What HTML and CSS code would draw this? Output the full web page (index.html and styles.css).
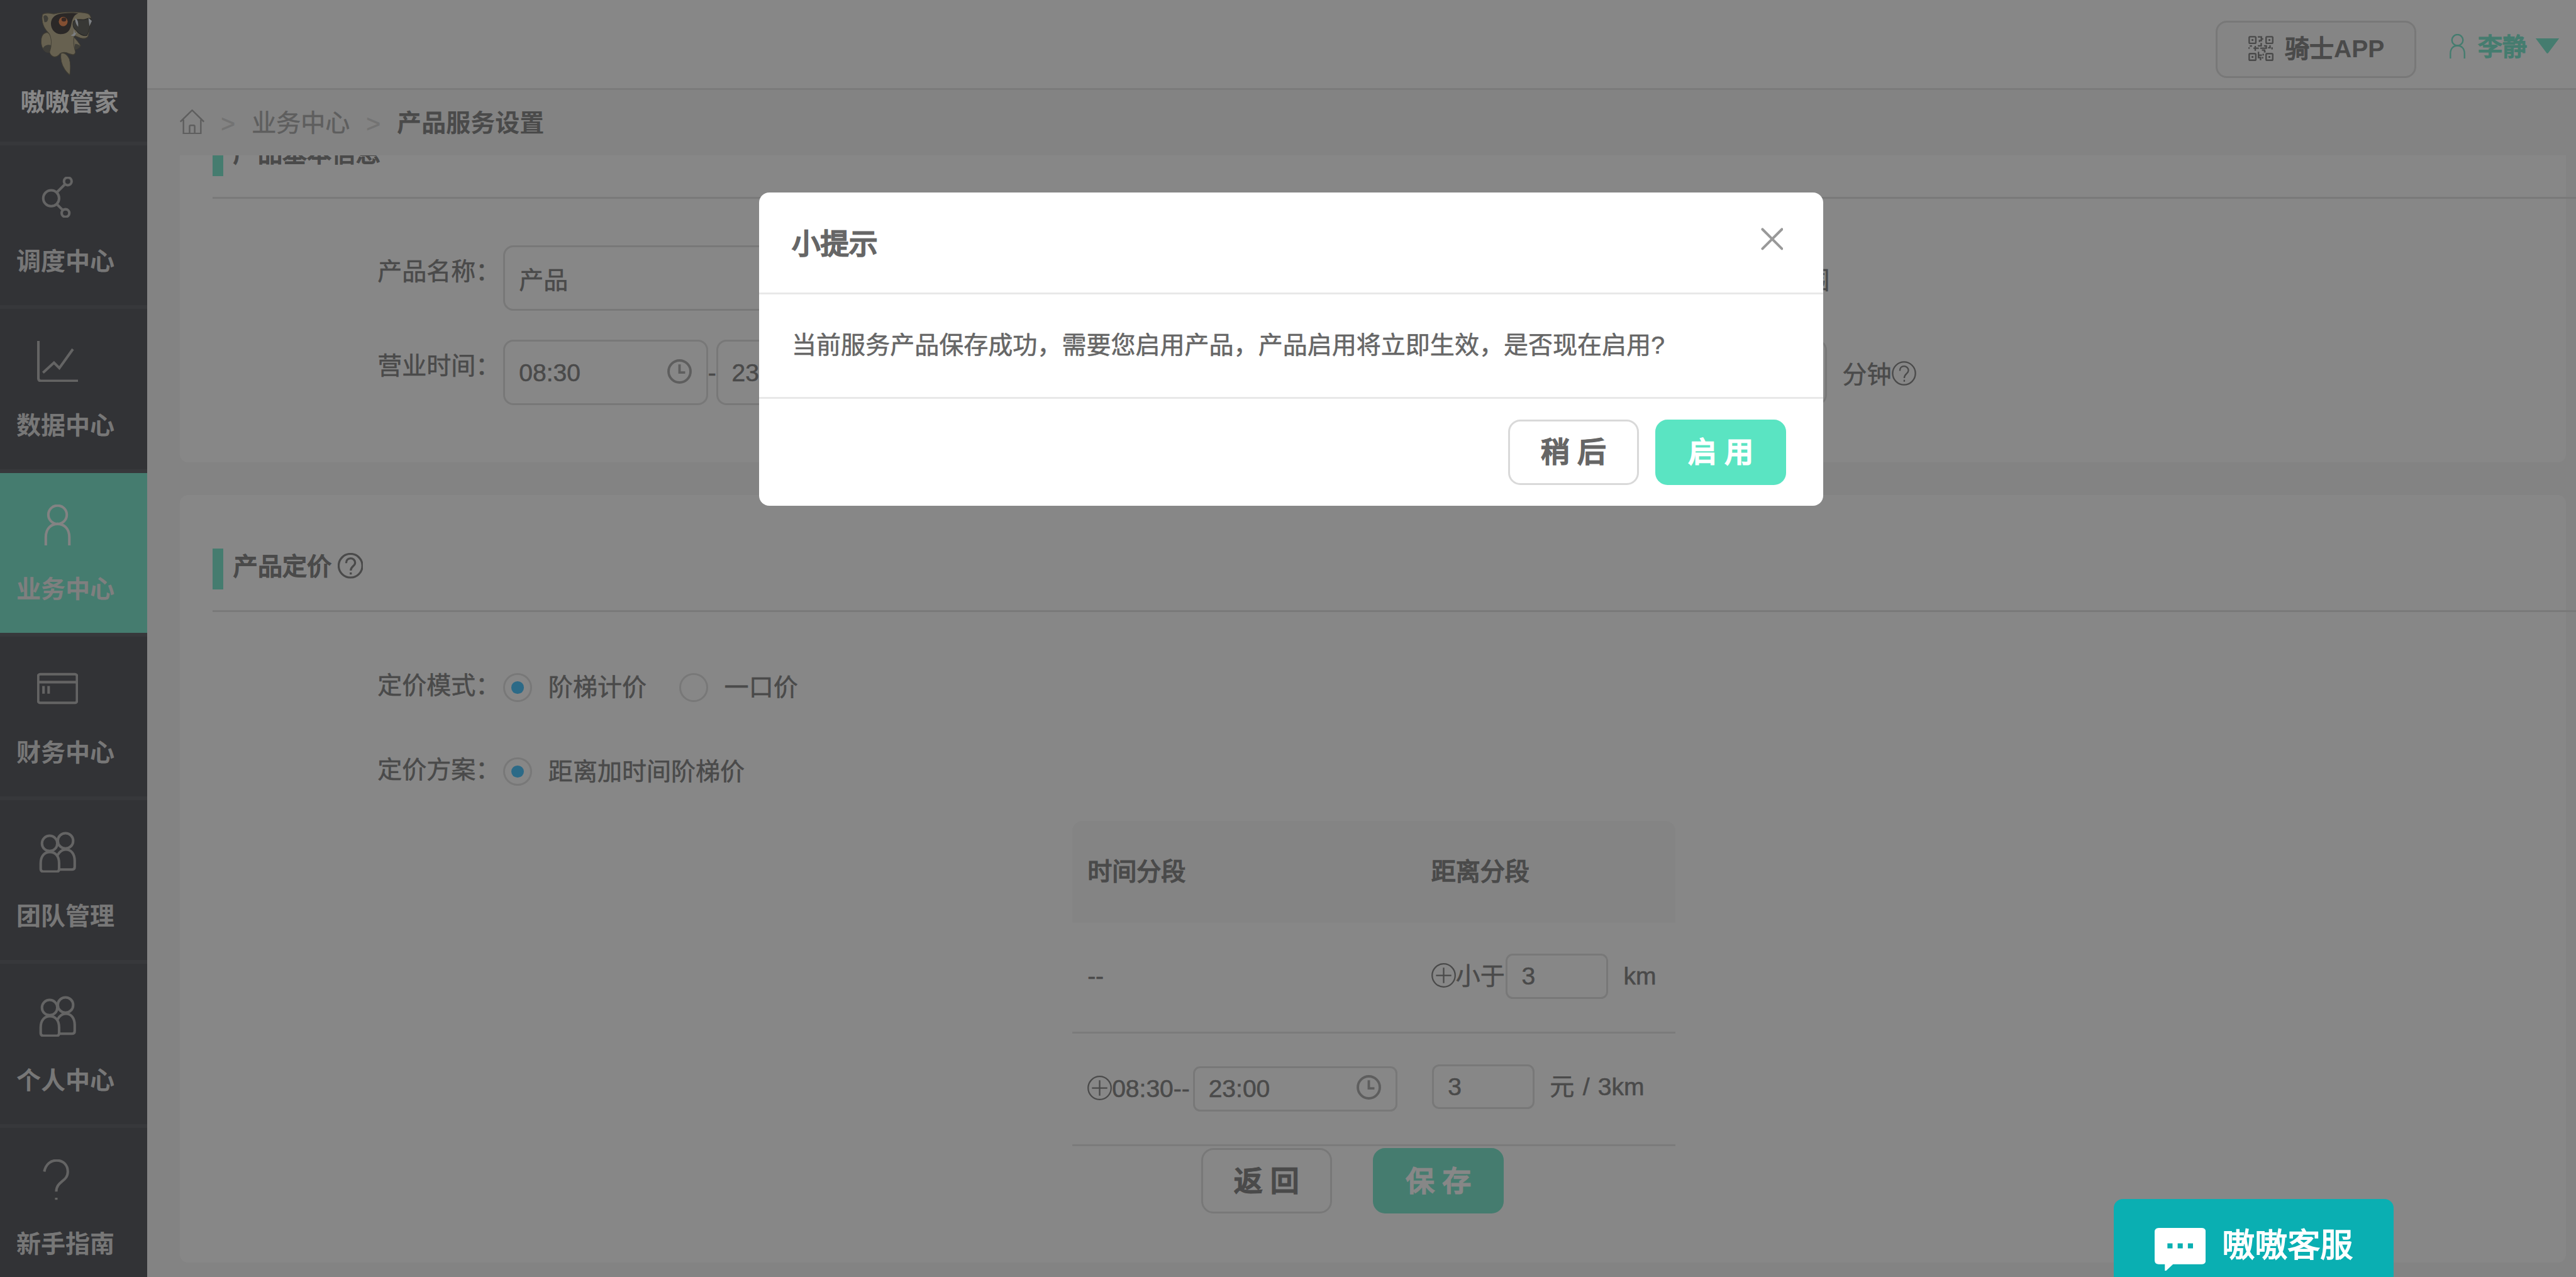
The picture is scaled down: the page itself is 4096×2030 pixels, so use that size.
FILE: index.html
```html
<!DOCTYPE html>
<html lang="zh-CN">
<head>
<meta charset="utf-8">
<title>嗷嗷管家 - 产品服务设置</title>
<link rel="stylesheet" href="styles.css">
</head>
<body>
<svg class="sprite" aria-hidden="true">
  <symbol id="i-help" viewBox="0 0 50 50"><circle cx="25" cy="25" r="23.2"/><path d="M16.5 20C16.5 14 20 10.5 25 10.5S34 14 34 19C34 26 25.500 26 25.500 34.500M25.500 38v4"/></symbol>
  <symbol id="i-clock" viewBox="0 0 48 48"><circle cx="24" cy="24" r="21.500"/><path class="hand" d="M24 10V26H35"/></symbol>
  <symbol id="i-plus" viewBox="0 0 48 48"><circle cx="24" cy="24" r="22.500"/><path d="M24 9V39M9 24H39"/></symbol>
  <symbol id="i-user" viewBox="0 0 80 80"><circle cx="40" cy="20" r="18"/><path d="M17 80V64C17 47 27 38 40 38S63 47 63 64V80"/></symbol>
  <symbol id="i-team" viewBox="0 0 80 80"><circle cx="24.500" cy="23" r="15"/><circle cx="55.500" cy="18" r="15"/><path d="M12 78H39Q43 78 43 73V62C43 48 36 40 25 40S7 48 7 62V73Q7 78 12 78ZM40 46C44 39 50 35 56 35C67 35 73.500 44 73.500 57V69Q73.500 74 69 74H44"/></symbol>
</svg>

<div class="app">
  <nav class="sidebar">
    <div class="brand">
      <svg class="brand-logo" viewBox="228 35 324 230" preserveAspectRatio="none">
        <path class="fur" d="M357 182C352 205 362 222 380 238C390 247 400 252 408 256C414 235 413 215 405 200C395 187 375 178 357 182Z"/>
        <path class="fur" d="M300 118C275 105 248 112 242 132C238 150 244 165 262 174C274 180 284 179 292 178L306 150Z"/>
        <path class="shade" d="M250 166C260 154 285 150 302 156L294 178C276 183 260 178 250 166Z"/>
        <path class="fur" d="M430 125C445 134 462 146 472 156C462 166 445 170 432 168Z"/>
        <path class="shade" d="M440 150C452 150 464 153 470 157C460 166 446 170 434 167Z"/>
        <path class="fur" d="M248 50C262 43 290 45 315 48C370 40 460 40 510 46C530 49 537 60 532 80L516 124C508 134 490 133 470 130L434 122C428 140 432 160 442 178C438 190 424 188 405 184C380 176 352 180 345 188C325 200 298 195 290 178C305 155 302 130 288 116C268 104 246 88 246 62Z"/>
        <path class="shade" d="M254 58C262 48 280 54 282 64C280 74 270 78 260 76Z"/>
        <path class="patch" d="M298 80C300 58 330 47 370 46C400 44 435 44 458 46C430 52 424 66 418 82C412 106 390 118 352 117C318 115 298 100 298 80Z"/>
        <path class="mouth" d="M428 76C438 64 460 68 486 68C505 68 522 58 534 66C530 90 520 108 510 121C490 125 460 116 446 104C432 98 424 88 428 76Z"/>
        <path class="fang" d="M440 64C452 64 460 74 458 92C448 86 440 76 440 64ZM518 62L538 72L524 90ZM414 122L430 116L434 100L438 114L450 110L436 124Z"/>
        <ellipse class="eye" cx="370" cy="74" rx="26" ry="16"/>
        <ellipse class="pupil" cx="374" cy="67" rx="14" ry="7"/>
      </svg>
      <span class="brand-name">嗷嗷管家</span>
    </div>
    <a class="nav-item">
      <svg class="nav-icon" viewBox="0 0 80 80"><circle cx="27.500" cy="42" r="15.500"/><circle cx="60" cy="9" r="7.500"/><circle cx="55.500" cy="71" r="7.500"/><path d="M38 31L54 15M38 53L50 65"/></svg>
      <span>调度中心</span>
    </a>
    <a class="nav-item">
      <svg class="nav-icon" viewBox="0 0 80 80"><path d="M2.500 0V73Q2.500 78 7 78H80M11.500 62L33 42.500L43.500 53L70 16"/></svg>
      <span>数据中心</span>
    </a>
    <a class="nav-item active">
      <svg class="nav-icon"><use href="#i-user"/></svg>
      <span>业务中心</span>
    </a>
    <a class="nav-item">
      <svg class="nav-icon" viewBox="0 0 80 80"><rect x="2" y="12" width="76" height="56" rx="4"/><path d="M2 27.500H78M12.500 35V50M22.500 35V50"/></svg>
      <span>财务中心</span>
    </a>
    <a class="nav-item">
      <svg class="nav-icon"><use href="#i-team"/></svg>
      <span>团队管理</span>
    </a>
    <a class="nav-item">
      <svg class="nav-icon"><use href="#i-team"/></svg>
      <span>个人中心</span>
    </a>
    <a class="nav-item">
      <svg class="nav-icon" viewBox="0 0 80 80"><path d="M14 24C17 9 27 2 38 2C52 2 60 12 60 24C60 44 37.500 42 37.500 63M37.500 75V79"/></svg>
      <span>新手指南</span>
    </a>
  </nav>

  <div class="page">
    <header class="topbar">
      <div class="app-btn">
        <svg class="qr" viewBox="28 28 148 148">
          <g class="finder"><rect x="33" y="33" width="39" height="39" rx="5"/><rect x="133" y="33" width="39" height="39" rx="5"/><rect x="33" y="133" width="39" height="39" rx="5"/><rect x="133" y="133" width="39" height="39" rx="5"/></g>
          <g class="dot"><rect x="47" y="47" width="11" height="11"/><rect x="147" y="47" width="11" height="11"/><rect x="47" y="147" width="11" height="11"/><rect x="147" y="147" width="11" height="11"/></g>
          <path d="M84 34H105V46H116M105 46V56H94V64M32 104V96M36 88H50M58 101H90M69 87V116M84 87H108M104 70V90M98 101H138M120 87H134V104M108 112H124V122H130M156 84V98H144M168 96V108M88 122V142H108M88 142V156H104M116 134V144M100 160V172M112 152V162"/>
        </svg>
        <span>骑士<b>APP</b></span>
      </div>
      <div class="account">
        <svg class="account-icon"><use href="#i-user"/></svg>
        <span>李静</span>
        <svg class="caret" viewBox="0 0 48 30"><path d="M1 0H47L26 28Q24 31 22 28Z"/></svg>
      </div>
    </header>

    <div class="crumbs">
      <svg class="home" viewBox="0 0 48 48"><path d="M1 24L24 1.500L47 24M7 20V47H41V20M19 47V33Q19 31 21 31H27Q29 31 29 33V47"/></svg>
      <span class="sep">&gt;</span>
      <span>业务中心</span>
      <span class="sep">&gt;</span>
      <strong>产品服务设置</strong>
    </div>

    <main class="scroller">
      <section class="card card-basic">
        <h2 class="section-head"><i></i><span>产品基本信息</span></h2>
        <div class="field-row first">
          <label>产品名称：</label>
          <div class="input wide"><span class="cjk">产品</span></div>
          <span class="scope">范围</span>
        </div>
        <div class="field-row">
          <label>营业时间：</label>
          <div class="input time"><span>08:30</span><svg class="clock"><use href="#i-clock"/></svg></div>
          <span class="dash">-</span>
          <div class="input time"><span>23:00</span><svg class="clock"><use href="#i-clock"/></svg></div>
          <div class="input minutes"></div>
          <span class="unit">分钟</span>
          <svg class="help-sm"><use href="#i-help"/></svg>
        </div>
      </section>

      <section class="card card-price">
        <h2 class="section-head"><i></i><span>产品定价</span><svg class="help-lg"><use href="#i-help"/></svg></h2>
        <div class="radio-row mode">
          <label>定价模式：</label>
          <span class="radio checked"></span><span class="radio-text">阶梯计价</span>
          <span class="radio"></span><span class="radio-text">一口价</span>
        </div>
        <div class="radio-row plan">
          <label>定价方案：</label>
          <span class="radio checked"></span><span class="radio-text">距离加时间阶梯价</span>
        </div>

        <div class="tiers">
          <div class="tr head"><div class="td">时间分段</div><div class="td">距离分段</div></div>
          <div class="tr distance">
            <div class="td">--</div>
            <div class="td"><svg class="plus"><use href="#i-plus"/></svg><span>小于</span><div class="input small after-text">3</div><span class="suffix">km</span></div>
          </div>
          <div class="tr period">
            <div class="td"><svg class="plus"><use href="#i-plus"/></svg><span>08:30--</span><div class="input small period-end"><span>23:00</span><svg class="clock"><use href="#i-clock"/></svg></div></div>
            <div class="td price"><div class="input small lead">3</div><span class="suffix">元 / 3km</span></div>
          </div>
        </div>

        <div class="actions">
          <div class="btn">返 回</div>
          <div class="btn primary">保 存</div>
        </div>
      </section>
    </main>
  </div>
</div>

<div class="mask"></div>

<div class="modal" role="dialog">
  <div class="modal-head">
    <span>小提示</span>
    <svg class="close" viewBox="0 0 44 44"><path d="M3 3L41 41M41 3L3 41"/></svg>
  </div>
  <div class="modal-body">当前服务产品保存成功，需要您启用产品，产品启用将立即生效，是否现在启用?</div>
  <div class="modal-foot">
    <div class="btn">稍 后</div>
    <div class="btn primary">启 用</div>
  </div>
</div>

<div class="chat">
  <svg class="bubble" viewBox="0 0 100 84"><path class="bubble-shape" d="M8 0H92Q100 0 100 8V63Q100 71 92 71H36L22 84H20V71H8Q0 71 0 63V8Q0 0 8 0Z"/><path class="bubble-dots" d="M25 30h10v10h-10zM45 30h10v10h-10zM65 30h10v10h-10z"/></svg>
  <span>嗷嗷客服</span>
</div>
</body>
</html>
```
FILE: styles.css
```css
/* 1rem = 100 design units; the design is 5036 units wide */
html {
  font-size: calc(100vw / 50.36);
}

* {
  box-sizing: border-box;
}

body {
  margin: 0;
  height: 100vh;
  overflow: hidden;
  background: #f5f5f5;
  color: #666;
  font-family: "Liberation Sans", "Noto Sans CJK SC", sans-serif;
  font-size: 0.48rem;
  line-height: 1;
  white-space: nowrap;
  -webkit-text-stroke: 0.007rem currentColor;
}

svg {
  display: block;
  flex: none;
  fill: none;
  stroke: currentColor;
}

.sprite {
  position: absolute;
  width: 0;
  height: 0;
}

.app {
  display: flex;
  height: 100vh;
}

/* sidebar */
.sidebar {
  flex: none;
  width: 2.88rem;
  height: 100vh;
  overflow: hidden;
  background: #2c2d35;
  font-weight: 700;
  -webkit-text-stroke-width: 0;
}

.brand {
  height: 2.84rem;
  padding: 0.2rem 0 0 0.4rem;
  border-bottom: 0.08rem solid #393a41;
  color: #fff;
}

.brand-logo {
  width: 1.08rem;
  height: 1.32rem;
  margin-left: 0.36rem;
  stroke: none;
}

.brand-name {
  display: block;
  margin-top: 0.24rem;
  line-height: 0.5rem;
}

.fur { fill: #aea077; stroke: #4a432c; stroke-width: 3; }
.shade { fill: #4c4a3c; }
.patch { fill: #19120f; }
.mouth { fill: #3a3a34; stroke: #14140f; stroke-width: 3; }
.fang { fill: #e4ebf5; }
.eye { fill: #f4742c; }
.pupil { fill: #3a1408; }

.nav-item {
  display: block;
  height: 3.2rem;
  padding: 0.62rem 0 0 0.32rem;
  border-bottom: 0.08rem solid #393a41;
  color: #d8d8d8;
}

.nav-item.active {
  background: #5ae4c2;
  color: #eaeaea;
}

.nav-item span {
  display: block;
  margin-top: 0.6rem;
  line-height: 0.52rem;
}

.nav-icon {
  width: 0.8rem;
  height: 0.8rem;
  margin-left: 0.4rem;
  color: #a8a8a8;
  stroke-width: 5;
}

.active .nav-icon {
  color: #f4f4f4;
}

/* header */
.page {
  flex: 1;
  min-width: 0;
  display: flex;
  flex-direction: column;
}

.topbar {
  flex: none;
  display: flex;
  justify-content: flex-end;
  height: 1.76rem;
  padding: 0.4rem 0.32rem 0 0;
  border-bottom: 0.04rem solid #e2e2e2;
  background: #fff;
  -webkit-text-stroke-width: 0.022rem;
}

.app-btn {
  display: flex;
  align-items: center;
  gap: 0.22rem;
  width: 3.92rem;
  height: 1.12rem;
  padding: 0 0 0.02rem 0.6rem;
  border: 0.04rem solid #d9d9d9;
  border-radius: 0.22rem;
  background: #fafafa;
}

.app-btn b {
  -webkit-text-stroke-width: 0;
}

.qr {
  width: 0.49rem;
  height: 0.49rem;
}

.qr path, .qr .finder { stroke-width: 9; }
.qr .dot { fill: currentColor; stroke: none; }

.account {
  display: flex;
  align-items: center;
  height: 1rem;
  margin-left: 0.56rem;
  color: #5ae4c2;
}

.account span {
  margin: 0.03rem 0.16rem 0;
}

.account-icon {
  width: 0.48rem;
  height: 0.48rem;
  stroke-width: 5;
}

.caret {
  width: 0.48rem;
  height: 0.3rem;
  fill: currentColor;
  stroke: none;
}

.crumbs {
  flex: none;
  display: flex;
  align-items: center;
  gap: 0.32rem;
  height: 1.28rem;
  padding-left: 0.64rem;
  color: #999;
}

.crumbs strong {
  color: #666;
  -webkit-text-stroke-width: 0;
}

.crumbs .sep {
  margin-top: 0.04rem;
  color: #ccc;
}

.home {
  width: 0.48rem;
  height: 0.48rem;
  margin-top: -0.04rem;
  stroke-width: 3;
}

/* content */
.scroller {
  flex: 1;
  min-height: 0;
  overflow: hidden;
  padding: 0 0.2rem 0 0.64rem;
}

.card {
  padding: 1.04rem 0 0 0.64rem;
  border-radius: 0.16rem;
  background: #fff;
}

.card-basic {
  height: 7.44rem;
  margin-top: -1.44rem;
}

.card-price {
  height: 15rem;
  margin-top: 0.64rem;
}

.section-head {
  display: flex;
  align-items: flex-start;
  height: 1.24rem;
  margin: 0 -0.2rem 0 0;
  border-bottom: 0.04rem solid #dcdcdc;
  font-size: 0.48rem;
  font-weight: 400;
  line-height: 0.72rem;
  -webkit-text-stroke-width: 0.022rem;
}

.section-head i {
  width: 0.2rem;
  height: 0.8rem;
  margin-right: 0.2rem;
  background: #5ae4c2;
}

.help-lg {
  width: 0.5rem;
  height: 0.5rem;
  margin: 0.09rem 0 0 0.12rem;
  stroke-width: 4;
}

.help-sm {
  width: 0.48rem;
  height: 0.48rem;
  margin: 0.42rem 0 0 0.01rem;
  stroke-width: 3;
}

.field-row {
  display: flex;
  align-items: flex-start;
  height: 1.28rem;
  margin: 0.56rem 0 0 3.22rem;
}

.field-row.first {
  margin-top: 0.92rem;
}

.field-row label,
.radio-row label {
  flex: none;
  width: 2.46rem;
  line-height: 1.04rem;
}

.input {
  flex: none;
  display: flex;
  align-items: center;
  justify-content: space-between;
  height: 1.28rem;
  padding: 0 0.28rem 0 0.27rem;
  border: 0.04rem solid #d9d9d9;
  border-radius: 0.2rem;
}

.input.wide { width: 8.16rem; }
.input.time { width: 4rem; }
.input.minutes { width: 4rem; margin-left: 13.72rem; }
.input .cjk { margin-top: 0.08rem; }

.clock {
  width: 0.48rem;
  height: 0.48rem;
  margin-top: -0.05rem;
  color: #999;
  stroke-width: 4.8;
}

.dash {
  width: 0.16rem;
  line-height: 1.3rem;
}

.scope {
  margin-left: 16.81rem;
  line-height: 1.38rem;
}

.unit {
  margin-left: 0.3rem;
  line-height: 1.38rem;
}

.radio-row {
  display: flex;
  height: 0.56rem;
  margin-left: 3.22rem;
}

.radio-row.mode { margin-top: 1.2rem; }
.radio-row.plan { margin-top: 1.08rem; }
.radio-row label { line-height: 0.48rem; }

.radio {
  flex: none;
  display: flex;
  align-items: center;
  justify-content: center;
  width: 0.56rem;
  height: 0.56rem;
  border: 0.04rem solid #d9d9d9;
  border-radius: 50%;
}

.radio.checked::after {
  content: "";
  width: 0.24rem;
  height: 0.24rem;
  border-radius: 50%;
  background: #1cb6ff;
}

.radio-text {
  margin: 0 0.64rem 0 0.32rem;
  line-height: 0.56rem;
}

/* tier table */
.tiers {
  width: 11.8rem;
  margin: 0.68rem 0 0 16.8rem;
}

.tr {
  display: grid;
  grid-template-columns: 6.72rem 5.08rem;
  height: 2.2rem;
  border-bottom: 0.04rem solid #e0e0e0;
}

.tr.head {
  height: 2rem;
  border: 0;
  border-radius: 0.2rem 0.2rem 0 0;
  background: #f7f7f7;
  -webkit-text-stroke-width: 0.02rem;
}

.tr.distance {
  height: 2.16rem;
}

.td {
  display: flex;
  align-items: center;
  padding-left: 0.3rem;
}

.distance .td { padding-bottom: 0.04rem; }
.period .price { padding-bottom: 0.08rem; }

.plus {
  width: 0.48rem;
  height: 0.48rem;
  margin-top: -0.04rem;
  stroke-width: 2.8;
}

.input.small {
  width: 2rem;
  height: 0.88rem;
  border-radius: 0.14rem;
}

.input.after-text { margin-left: 0.02rem; }
.input.lead { margin-left: 0.02rem; }
.input.period-end { width: 4rem; margin-left: 0.06rem; }

.suffix {
  margin-left: 0.3rem;
  word-spacing: 0.03rem;
}

/* buttons */
.actions {
  display: flex;
  gap: 0.8rem;
  margin: 0.04rem 0 0 19.32rem;
}

.btn {
  display: flex;
  align-items: center;
  justify-content: center;
  width: 2.56rem;
  height: 1.28rem;
  padding-top: 0.03rem;
  border: 0.04rem solid #d9d9d9;
  border-radius: 0.24rem;
  font-size: 0.56rem;
  -webkit-text-stroke-width: 0.03rem;
}

.btn.primary {
  border-color: #5ae4c2;
  background: #5ae4c2;
  color: #fff;
}

/* dialog */
.mask {
  position: fixed;
  inset: 0;
  background: rgba(55, 55, 55, 0.6);
}

.modal {
  position: fixed;
  top: 3.76rem;
  left: 14.84rem;
  width: 20.8rem;
  height: 6.12rem;
  border-radius: 0.2rem;
  background: #fff;
}

.modal-head {
  display: flex;
  justify-content: space-between;
  height: 2rem;
  padding: 0.69rem 0.78rem 0 0.64rem;
  border-bottom: 0.04rem solid #e8e8e8;
  font-size: 0.56rem;
  line-height: 0.66rem;
  -webkit-text-stroke-width: 0.03rem;
}

.close {
  width: 0.44rem;
  height: 0.44rem;
  color: #999;
  stroke-width: 5;
  stroke-linecap: round;
}

.modal-body {
  height: 2.04rem;
  padding-left: 0.64rem;
  border-bottom: 0.04rem solid #e8e8e8;
  line-height: 2rem;
}

.modal-foot {
  display: flex;
  justify-content: flex-end;
  gap: 0.32rem;
  padding: 0.4rem 0.72rem 0;
}

/* support entry */
.chat {
  position: fixed;
  left: 41.32rem;
  bottom: 0;
  display: flex;
  gap: 0.32rem;
  width: 5.48rem;
  height: 1.52rem;
  padding: 0.56rem 0 0 0.8rem;
  border-radius: 0.18rem 0.18rem 0 0;
  background: #0aafb2;
  color: #fff;
  font-size: 0.64rem;
  line-height: 0.7rem;
  -webkit-text-stroke-width: 0.02rem;
}

.bubble {
  width: 1rem;
  height: 0.84rem;
  stroke: none;
}

.bubble-shape { fill: #fff; }
.bubble-dots { fill: #0aafb2; }
```
